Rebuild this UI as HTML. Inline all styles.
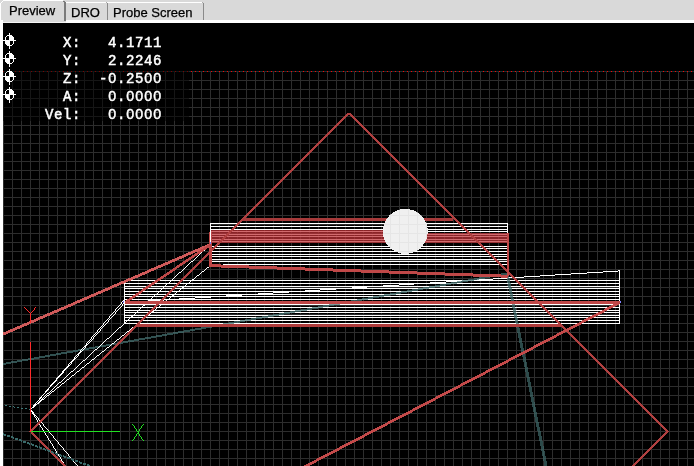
<!DOCTYPE html>
<html><head><meta charset="utf-8"><style>
html,body{margin:0;padding:0;width:694px;height:466px;overflow:hidden;background:#d9d9d9}
svg{position:absolute;left:0;top:0;will-change:transform}
.tab{font-family:"Liberation Sans",sans-serif;font-size:13px;fill:#000;stroke:#000;stroke-width:0.25px}
.dro{font-family:"Liberation Mono",monospace;font-weight:normal;font-size:14px;letter-spacing:0.6px;fill:#fff;stroke:#fff;stroke-width:0.5px;white-space:pre}
</style></head><body>
<svg width="694" height="466" viewBox="0 0 694 466">
<rect x="0" y="0" width="694" height="23" fill="#d9d9d9"/>
<rect x="66" y="20" width="628" height="3" fill="#ffffff"/>
<rect x="0" y="22" width="66" height="1" fill="#f4f4f4"/>
<rect x="0" y="20" width="3" height="446" fill="#ffffff"/>
<path d="M0 466V4H1V3H2V2H3V1H63V0H3V1H2V2H1V3H0Z" fill="#fff"/>
<rect x="0" y="3" width="1" height="20" fill="#fff"/>
<rect x="3" y="0" width="60" height="1" fill="#fff"/>
<rect x="2" y="1" width="1" height="1" fill="#fff"/>
<rect x="1" y="2" width="1" height="1" fill="#fff"/>
<rect x="64" y="2" width="2" height="19" fill="#7a7a7a"/>
<rect x="63" y="1" width="2" height="1" fill="#7a7a7a"/>
<rect x="66" y="2" width="136" height="1" fill="#ffffff"/>
<rect x="107" y="3" width="1" height="17" fill="#8a8a8a"/>
<rect x="106" y="2" width="1" height="1" fill="#aaaaaa"/>
<rect x="203" y="3" width="1" height="17" fill="#8a8a8a"/>
<rect x="202" y="2" width="1" height="1" fill="#aaaaaa"/>
<text class="tab" x="9" y="15">Preview</text>
<text class="tab" x="71" y="17">DRO</text>
<text class="tab" x="113" y="17">Probe Screen</text>
<rect x="3" y="23" width="691" height="443" fill="#000"/>
<path d="M3.5 71V466M12.5 71V466M21.5 71V466M30.5 71V466M39.5 71V466M48.5 71V466M57.5 71V466M66.5 71V466M75.5 71V466M84.5 71V466M93.5 71V466M102.5 71V466M111.5 71V466M120.5 71V466M129.5 71V466M138.5 71V466M147.5 71V466M156.5 71V466M165.5 71V466M174.5 71V466M183.5 71V466M192.5 71V466M201.5 71V466M210.5 71V466M219.5 71V466M228.5 71V466M237.5 71V466M246.5 71V466M255.5 71V466M264.5 71V466M273.5 71V466M282.5 71V466M291.5 71V466M300.5 71V466M309.5 71V466M318.5 71V466M327.5 71V466M336.5 71V466M345.5 71V466M354.5 71V466M363.5 71V466M372.5 71V466M381.5 71V466M390.5 71V466M399.5 71V466M408.5 71V466M417.5 71V466M426.5 71V466M435.5 71V466M444.5 71V466M453.5 71V466M462.5 71V466M471.5 71V466M480.5 71V466M489.5 71V466M498.5 71V466M507.5 71V466M516.5 71V466M525.5 71V466M534.5 71V466M543.5 71V466M552.5 71V466M561.5 71V466M570.5 71V466M579.5 71V466M588.5 71V466M597.5 71V466M606.5 71V466M615.5 71V466M624.5 71V466M633.5 71V466M642.5 71V466M651.5 71V466M660.5 71V466M669.5 71V466M678.5 71V466M687.5 71V466M3 80.5H694M3 89.5H694M3 98.5H694M3 107.5H694M3 116.5H694M3 125.5H694M3 134.5H694M3 143.5H694M3 152.5H694M3 161.5H694M3 170.5H694M3 179.5H694M3 188.5H694M3 197.5H694M3 206.5H694M3 215.5H694M3 224.5H694M3 233.5H694M3 242.5H694M3 251.5H694M3 260.5H694M3 269.5H694M3 278.5H694M3 287.5H694M3 296.5H694M3 305.5H694M3 314.5H694M3 323.5H694M3 332.5H694M3 341.5H694M3 350.5H694M3 359.5H694M3 368.5H694M3 377.5H694M3 386.5H694M3 395.5H694M3 404.5H694M3 413.5H694M3 422.5H694M3 431.5H694M3 440.5H694M3 449.5H694M3 458.5H694" stroke="#2d2d2d" stroke-width="1" shape-rendering="crispEdges" fill="none"/>
<path d="M3 71.5H694" stroke="#1c3030" stroke-width="1" shape-rendering="crispEdges"/>
<path d="M3 71h1v1h-1zM7 71h1v1h-1zM11 71h1v1h-1zM15 71h1v1h-1zM19 71h1v1h-1zM23 71h1v1h-1zM27 71h1v1h-1zM31 71h1v1h-1zM35 71h1v1h-1zM39 71h1v1h-1zM43 71h1v1h-1zM47 71h1v1h-1zM51 71h1v1h-1zM55 71h1v1h-1zM59 71h1v1h-1zM63 71h1v1h-1zM67 71h1v1h-1zM71 71h1v1h-1zM75 71h1v1h-1zM79 71h1v1h-1zM83 71h1v1h-1zM87 71h1v1h-1zM91 71h1v1h-1zM95 71h1v1h-1zM99 71h1v1h-1zM103 71h1v1h-1zM107 71h1v1h-1zM111 71h1v1h-1zM115 71h1v1h-1zM119 71h1v1h-1zM123 71h1v1h-1zM127 71h1v1h-1zM131 71h1v1h-1zM135 71h1v1h-1zM139 71h1v1h-1zM143 71h1v1h-1zM147 71h1v1h-1zM151 71h1v1h-1zM155 71h1v1h-1zM159 71h1v1h-1zM163 71h1v1h-1zM167 71h1v1h-1zM171 71h1v1h-1zM175 71h1v1h-1zM179 71h1v1h-1zM183 71h1v1h-1zM187 71h1v1h-1zM191 71h1v1h-1zM195 71h1v1h-1zM199 71h1v1h-1zM203 71h1v1h-1zM207 71h1v1h-1zM211 71h1v1h-1zM215 71h1v1h-1zM219 71h1v1h-1zM223 71h1v1h-1zM227 71h1v1h-1zM231 71h1v1h-1zM235 71h1v1h-1zM239 71h1v1h-1zM243 71h1v1h-1zM247 71h1v1h-1zM251 71h1v1h-1zM255 71h1v1h-1zM259 71h1v1h-1zM263 71h1v1h-1zM267 71h1v1h-1zM271 71h1v1h-1zM275 71h1v1h-1zM279 71h1v1h-1zM283 71h1v1h-1zM287 71h1v1h-1zM291 71h1v1h-1zM295 71h1v1h-1zM299 71h1v1h-1zM303 71h1v1h-1zM307 71h1v1h-1zM311 71h1v1h-1zM315 71h1v1h-1zM319 71h1v1h-1zM323 71h1v1h-1zM327 71h1v1h-1zM331 71h1v1h-1zM335 71h1v1h-1zM339 71h1v1h-1zM343 71h1v1h-1zM347 71h1v1h-1zM351 71h1v1h-1zM355 71h1v1h-1zM359 71h1v1h-1zM363 71h1v1h-1zM367 71h1v1h-1zM371 71h1v1h-1zM375 71h1v1h-1zM379 71h1v1h-1zM383 71h1v1h-1zM387 71h1v1h-1zM391 71h1v1h-1zM395 71h1v1h-1zM399 71h1v1h-1zM403 71h1v1h-1zM407 71h1v1h-1zM411 71h1v1h-1zM415 71h1v1h-1zM419 71h1v1h-1zM423 71h1v1h-1zM427 71h1v1h-1zM431 71h1v1h-1zM435 71h1v1h-1zM439 71h1v1h-1zM443 71h1v1h-1zM447 71h1v1h-1zM451 71h1v1h-1zM455 71h1v1h-1zM459 71h1v1h-1zM463 71h1v1h-1zM467 71h1v1h-1zM471 71h1v1h-1zM475 71h1v1h-1zM479 71h1v1h-1zM483 71h1v1h-1zM487 71h1v1h-1zM491 71h1v1h-1zM495 71h1v1h-1zM499 71h1v1h-1zM503 71h1v1h-1zM507 71h1v1h-1zM511 71h1v1h-1zM515 71h1v1h-1zM519 71h1v1h-1zM523 71h1v1h-1zM527 71h1v1h-1zM531 71h1v1h-1zM535 71h1v1h-1zM539 71h1v1h-1zM543 71h1v1h-1zM547 71h1v1h-1zM551 71h1v1h-1zM555 71h1v1h-1zM559 71h1v1h-1zM563 71h1v1h-1zM567 71h1v1h-1zM571 71h1v1h-1zM575 71h1v1h-1zM579 71h1v1h-1zM583 71h1v1h-1zM587 71h1v1h-1zM591 71h1v1h-1zM595 71h1v1h-1zM599 71h1v1h-1zM603 71h1v1h-1zM607 71h1v1h-1zM611 71h1v1h-1zM615 71h1v1h-1zM619 71h1v1h-1zM623 71h1v1h-1zM627 71h1v1h-1zM631 71h1v1h-1zM635 71h1v1h-1zM639 71h1v1h-1zM643 71h1v1h-1zM647 71h1v1h-1zM651 71h1v1h-1zM655 71h1v1h-1zM659 71h1v1h-1zM663 71h1v1h-1zM667 71h1v1h-1zM671 71h1v1h-1zM675 71h1v1h-1zM679 71h1v1h-1zM683 71h1v1h-1zM687 71h1v1h-1zM691 71h1v1h-1z" fill="#ff0000"/>

<g fill="none" shape-rendering="crispEdges">
<path d="M210 223.5H507M210 226.5H507M210 229.5H507M210 231.5H507M210 234.5H507M210 236.5H507M210 239.5H507M210 241.5H507M210 246.5H507M210 248.5H507M210 251.5H507M210 254.5H507M210 256.5H507M210 259.5H507M210 261.5H507M223 264.5H507" stroke="#fff" stroke-width="1" shape-rendering="crispEdges"/>
<path d="M124 280.5H620M124 283.5H620M124 286.5H620M124 288.5H620M124 291.5H620M124 294.5H620M124 296.5H620M124 299.5H620M124 302.5H620M124 304.5H620M124 307.5H620M124 310.5H620M124 312.5H620M124 315.5H620M124 317.5H620M124 320.5H620M124 323.5H620M124.5 283V324M619.5 271V324" stroke="#fff" stroke-width="1" shape-rendering="crispEdges"/>
<path d="M124 302h8v1h-8zM132 301h16v1h-16zM148 300h16v1h-16zM164 299h15v1h-15zM179 298h16v1h-16zM195 297h16v1h-16zM211 296h15v1h-15zM226 295h16v1h-16zM242 294h16v1h-16zM258 293h15v1h-15zM273 292h16v1h-16zM289 291h16v1h-16zM305 290h15v1h-15zM320 289h16v1h-16zM336 288h16v1h-16zM352 287h15v1h-15zM367 286h16v1h-16zM383 285h16v1h-16zM399 284h15v1h-15zM414 283h16v1h-16zM430 282h16v1h-16zM446 281h15v1h-15zM461 280h16v1h-16zM477 279h16v1h-16zM493 278h15v1h-15zM508 277h16v1h-16zM524 276h16v1h-16zM540 275h15v1h-15zM555 274h16v1h-16zM571 273h16v1h-16zM587 272h16v1h-16zM603 271h15v1h-15zM618 270h2v1h-2z" fill="#fff"/>
<!-- upper band -->
<path d="M211 233H507V243H211ZM211 230H405V233H211Z" fill="rgb(191,50,55)" fill-opacity="0.72"/>
<!-- teal -->


<path d="M5 405.5L30 409.5" stroke="#3f7878" stroke-width="1" stroke-dasharray="2 2"/>
<path d="M3 363h3v2h-3zM6 362h5v2h-5zM11 361h6v2h-6zM17 360h5v2h-5zM22 359h6v2h-6zM28 358h6v2h-6zM34 357h5v2h-5zM39 356h6v2h-6zM45 355h5v2h-5zM50 354h6v2h-6zM56 353h5v2h-5zM61 352h6v2h-6zM67 351h6v2h-6zM73 350h5v2h-5zM78 349h6v2h-6zM84 348h5v2h-5zM89 347h6v2h-6zM95 346h5v2h-5zM100 345h6v2h-6zM106 344h6v2h-6zM112 343h5v2h-5zM117 342h6v2h-6zM123 341h5v2h-5zM128 340h6v2h-6zM134 339h5v2h-5zM139 338h6v2h-6zM145 337h6v2h-6zM151 336h5v2h-5zM156 335h6v2h-6zM162 334h5v2h-5zM167 333h6v2h-6zM173 332h5v2h-5zM178 331h6v2h-6zM184 330h6v2h-6zM190 329h5v2h-5zM195 328h6v2h-6zM201 327h5v2h-5zM206 326h6v2h-6zM212 325h5v2h-5zM217 324h6v2h-6zM223 323h6v2h-6zM229 322h5v2h-5zM234 321h6v2h-6zM240 320h5v2h-5zM245 319h6v2h-6zM251 318h5v2h-5zM256 317h6v2h-6zM262 316h6v2h-6zM268 315h5v2h-5zM273 314h6v2h-6zM279 313h5v2h-5zM284 312h6v2h-6zM290 311h5v2h-5zM295 310h6v2h-6zM301 309h6v2h-6zM307 308h5v2h-5zM312 307h6v2h-6zM318 306h5v2h-5zM323 305h6v2h-6zM329 304h5v2h-5zM334 303h6v2h-6zM340 302h5v2h-5zM345 301h6v2h-6zM351 300h6v2h-6zM357 299h5v2h-5zM362 298h6v2h-6zM368 297h5v2h-5zM373 296h6v2h-6zM379 295h5v2h-5zM384 294h6v2h-6zM390 293h6v2h-6zM396 292h5v2h-5zM401 291h6v2h-6zM407 290h5v2h-5zM412 289h6v2h-6zM418 288h5v2h-5zM423 287h6v2h-6zM429 286h6v2h-6zM435 285h5v2h-5zM440 284h6v2h-6zM446 283h5v2h-5zM451 282h6v2h-6zM457 281h5v2h-5zM462 280h6v2h-6zM468 279h6v2h-6zM474 278h5v2h-5zM479 277h6v2h-6zM485 276h5v2h-5zM490 275h6v2h-6zM496 274h5v2h-5zM501 273h6v2h-6z" fill="rgb(70,115,115)" fill-opacity="0.7"/><path d="M506 274h3v4h-3zM507 278h3v5h-3zM508 283h3v5h-3zM509 288h3v5h-3zM510 293h3v5h-3zM511 298h3v5h-3zM512 303h3v5h-3zM513 308h3v5h-3zM514 313h3v5h-3zM515 318h3v5h-3zM516 323h3v5h-3zM517 328h3v5h-3zM518 333h3v5h-3zM519 338h3v5h-3zM520 343h3v5h-3zM521 348h3v4h-3zM522 352h3v5h-3zM523 357h3v5h-3zM524 362h3v5h-3zM525 367h3v5h-3zM526 372h3v5h-3zM527 377h3v5h-3zM528 382h3v5h-3zM529 387h3v5h-3zM530 392h3v5h-3zM531 397h3v5h-3zM532 402h3v5h-3zM533 407h3v5h-3zM534 412h3v5h-3zM535 417h3v5h-3zM536 422h3v5h-3zM537 427h3v4h-3zM538 431h3v5h-3zM539 436h3v5h-3zM540 441h3v5h-3zM541 446h3v5h-3zM542 451h3v5h-3zM543 456h3v5h-3zM544 461h3v5h-3z" fill="rgb(62,105,105)" fill-opacity="0.7"/>
<!-- white fan -->
<path d="M123 300h1v1h-1zM122 301h1v1h-1zM121 302h1v2h-1zM120 304h1v1h-1zM119 305h1v1h-1zM118 306h1v1h-1zM117 307h1v1h-1zM116 308h1v1h-1zM115 309h1v2h-1zM114 311h1v1h-1zM113 312h1v1h-1zM112 313h1v1h-1zM111 314h1v1h-1zM110 315h1v1h-1zM109 316h1v2h-1zM108 318h1v1h-1zM107 319h1v1h-1zM106 320h1v1h-1zM105 321h1v1h-1zM104 322h1v1h-1zM103 323h1v2h-1zM102 325h1v1h-1zM101 326h1v1h-1zM100 327h1v1h-1zM99 328h1v1h-1zM98 329h1v1h-1zM97 330h1v2h-1zM96 332h1v1h-1zM95 333h1v1h-1zM94 334h1v1h-1zM93 335h1v1h-1zM92 336h1v1h-1zM91 337h1v2h-1zM90 339h1v1h-1zM89 340h1v1h-1zM88 341h1v1h-1zM87 342h1v1h-1zM86 343h1v2h-1zM85 345h1v1h-1zM84 346h1v1h-1zM83 347h1v1h-1zM82 348h1v1h-1zM81 349h1v1h-1zM80 350h1v2h-1zM79 352h1v1h-1zM78 353h1v1h-1zM77 354h1v1h-1zM76 355h1v1h-1zM75 356h1v1h-1zM74 357h1v2h-1zM73 359h1v1h-1zM72 360h1v1h-1zM71 361h1v1h-1zM70 362h1v1h-1zM69 363h1v1h-1zM68 364h1v2h-1zM67 366h1v1h-1zM66 367h1v1h-1zM65 368h1v1h-1zM64 369h1v1h-1zM63 370h1v1h-1zM62 371h1v2h-1zM61 373h1v1h-1zM60 374h1v1h-1zM59 375h1v1h-1zM58 376h1v1h-1zM57 377h1v1h-1zM56 378h1v2h-1zM55 380h1v1h-1zM54 381h1v1h-1zM53 382h1v1h-1zM52 383h1v1h-1zM51 384h1v1h-1zM50 385h1v2h-1zM49 387h1v1h-1zM48 388h1v1h-1zM47 389h1v1h-1zM46 390h1v1h-1zM45 391h1v2h-1zM44 393h1v1h-1zM43 394h1v1h-1zM42 395h1v1h-1zM41 396h1v1h-1zM40 397h1v1h-1zM39 398h1v2h-1zM38 400h1v1h-1zM37 401h1v1h-1zM36 402h1v1h-1zM35 403h1v1h-1zM34 404h1v1h-1zM33 405h1v2h-1zM32 407h1v1h-1zM31 408h1v1h-1zM30 409h1v1h-1zM125 301h1v1h-1zM124 302h1v1h-1zM123 303h1v1h-1zM122 304h1v2h-1zM121 306h1v1h-1zM120 307h1v1h-1zM119 308h1v1h-1zM118 309h1v1h-1zM117 310h1v1h-1zM116 311h1v1h-1zM115 312h1v2h-1zM114 314h1v1h-1zM113 315h1v1h-1zM112 316h1v1h-1zM111 317h1v1h-1zM110 318h1v1h-1zM109 319h1v1h-1zM108 320h1v2h-1zM107 322h1v1h-1zM106 323h1v1h-1zM105 324h1v1h-1zM104 325h1v1h-1zM103 326h1v1h-1zM102 327h1v1h-1zM101 328h1v1h-1zM100 329h1v2h-1zM99 331h1v1h-1zM98 332h1v1h-1zM97 333h1v1h-1zM96 334h1v1h-1zM95 335h1v1h-1zM94 336h1v1h-1zM93 337h1v2h-1zM92 339h1v1h-1zM91 340h1v1h-1zM90 341h1v1h-1zM89 342h1v1h-1zM88 343h1v1h-1zM87 344h1v1h-1zM86 345h1v1h-1zM85 346h1v2h-1zM84 348h1v1h-1zM83 349h1v1h-1zM82 350h1v1h-1zM81 351h1v1h-1zM80 352h1v1h-1zM79 353h1v1h-1zM78 354h1v2h-1zM77 356h1v1h-1zM76 357h1v1h-1zM75 358h1v1h-1zM74 359h1v1h-1zM73 360h1v1h-1zM72 361h1v1h-1zM71 362h1v2h-1zM70 364h1v1h-1zM69 365h1v1h-1zM68 366h1v1h-1zM67 367h1v1h-1zM66 368h1v1h-1zM65 369h1v1h-1zM64 370h1v1h-1zM63 371h1v2h-1zM62 373h1v1h-1zM61 374h1v1h-1zM60 375h1v1h-1zM59 376h1v1h-1zM58 377h1v1h-1zM57 378h1v1h-1zM56 379h1v2h-1zM55 381h1v1h-1zM54 382h1v1h-1zM53 383h1v1h-1zM52 384h1v1h-1zM51 385h1v1h-1zM50 386h1v1h-1zM49 387h1v1h-1zM48 388h1v2h-1zM47 390h1v1h-1zM46 391h1v1h-1zM45 392h1v1h-1zM44 393h1v1h-1zM43 394h1v1h-1zM42 395h1v1h-1zM41 396h1v2h-1zM40 398h1v1h-1zM39 399h1v1h-1zM38 400h1v1h-1zM37 401h1v1h-1zM36 402h1v1h-1zM35 403h1v1h-1zM34 404h1v2h-1zM33 406h1v1h-1zM32 407h1v1h-1zM31 408h1v1h-1zM30 409h1v1h-1zM31 408h1v1h-1zM32 407h1v1h-1zM33 406h1v1h-1zM34 405h1v1h-1zM35 404h2v1h-2zM37 403h1v1h-1zM38 402h1v1h-1zM39 401h1v1h-1zM40 400h1v1h-1zM41 399h1v1h-1zM42 398h1v1h-1zM43 397h1v1h-1zM44 396h1v1h-1zM45 395h1v1h-1zM46 394h1v1h-1zM47 393h2v1h-2zM49 392h1v1h-1zM50 391h1v1h-1zM51 390h1v1h-1zM52 389h1v1h-1zM53 388h1v1h-1zM54 387h1v1h-1zM55 386h1v1h-1zM56 385h1v1h-1zM57 384h1v1h-1zM58 383h1v1h-1zM59 382h2v1h-2zM61 381h1v1h-1zM62 380h1v1h-1zM63 379h1v1h-1zM64 378h1v1h-1zM65 377h1v1h-1zM66 376h1v1h-1zM67 375h1v1h-1zM68 374h1v1h-1zM69 373h1v1h-1zM70 372h1v1h-1zM71 371h2v1h-2zM73 370h1v1h-1zM74 369h1v1h-1zM75 368h1v1h-1zM76 367h1v1h-1zM77 366h1v1h-1zM78 365h1v1h-1zM79 364h1v1h-1zM80 363h1v1h-1zM81 362h1v1h-1zM82 361h1v1h-1zM83 360h2v1h-2zM85 359h1v1h-1zM86 358h1v1h-1zM87 357h1v1h-1zM88 356h1v1h-1zM89 355h1v1h-1zM90 354h1v1h-1zM91 353h1v1h-1zM92 352h1v1h-1zM93 351h1v1h-1zM94 350h1v1h-1zM95 349h2v1h-2zM97 348h1v1h-1zM98 347h1v1h-1zM99 346h1v1h-1zM100 345h1v1h-1zM101 344h1v1h-1zM102 343h1v1h-1zM103 342h1v1h-1zM104 341h1v1h-1zM105 340h1v1h-1zM106 339h1v1h-1zM107 338h2v1h-2zM109 337h1v1h-1zM110 336h1v1h-1zM111 335h1v1h-1zM112 334h1v1h-1zM113 333h1v1h-1zM114 332h1v1h-1zM115 331h1v1h-1zM116 330h1v1h-1zM117 329h1v1h-1zM118 328h1v1h-1zM119 327h2v1h-2zM121 326h1v1h-1zM122 325h1v1h-1zM123 324h1v1h-1zM124 323h1v1h-1zM125 322h1v1h-1zM126 321h1v1h-1zM127 320h1v1h-1zM128 319h1v1h-1zM129 318h1v1h-1zM130 317h1v1h-1zM131 316h2v1h-2zM133 315h1v1h-1zM134 314h1v1h-1zM135 313h1v1h-1zM136 312h1v1h-1zM137 311h1v1h-1zM138 310h1v1h-1zM139 309h1v1h-1zM140 308h1v1h-1zM141 307h1v1h-1zM142 306h1v1h-1zM143 305h2v1h-2zM145 304h1v1h-1zM146 303h1v1h-1zM147 302h1v1h-1zM148 301h1v1h-1zM149 300h1v1h-1zM150 299h1v1h-1zM151 298h1v1h-1zM152 297h1v1h-1zM153 296h1v1h-1zM154 295h1v1h-1zM155 294h2v1h-2zM157 293h1v1h-1zM158 292h1v1h-1zM159 291h1v1h-1zM160 290h1v1h-1zM161 289h1v1h-1zM162 288h1v1h-1zM163 287h1v1h-1zM164 286h1v1h-1zM165 285h1v1h-1zM166 284h1v1h-1zM167 283h2v1h-2zM169 282h1v1h-1zM170 281h1v1h-1zM171 280h1v1h-1zM172 279h1v1h-1zM173 278h1v1h-1zM174 277h1v1h-1zM175 276h1v1h-1zM176 275h1v1h-1zM177 274h1v1h-1zM178 273h1v1h-1zM179 272h2v1h-2zM181 271h1v1h-1zM182 270h1v1h-1zM183 269h1v1h-1zM184 268h1v1h-1zM185 267h1v1h-1zM186 266h1v1h-1zM187 265h1v1h-1zM188 264h1v1h-1zM189 263h1v1h-1zM190 262h1v1h-1zM191 261h2v1h-2zM193 260h1v1h-1zM194 259h1v1h-1zM195 258h1v1h-1zM196 257h1v1h-1zM197 256h1v1h-1zM198 255h1v1h-1zM199 254h1v1h-1zM200 253h1v1h-1zM201 252h1v1h-1zM202 251h1v1h-1zM203 250h2v1h-2zM205 249h1v1h-1zM206 248h1v1h-1zM207 247h1v1h-1zM208 246h1v1h-1zM209 245h1v1h-1zM31 408h1v1h-1zM32 407h2v1h-2zM34 406h1v1h-1zM35 405h1v1h-1zM36 404h1v1h-1zM37 403h2v1h-2zM39 402h1v1h-1zM40 401h1v1h-1zM41 400h1v1h-1zM42 399h2v1h-2zM44 398h1v1h-1zM45 397h1v1h-1zM46 396h1v1h-1zM47 395h2v1h-2zM49 394h1v1h-1zM50 393h1v1h-1zM51 392h1v1h-1zM52 391h2v1h-2zM54 390h1v1h-1zM55 389h1v1h-1zM56 388h1v1h-1zM57 387h2v1h-2zM59 386h1v1h-1zM60 385h1v1h-1zM61 384h1v1h-1zM62 383h2v1h-2zM64 382h1v1h-1zM65 381h1v1h-1zM66 380h1v1h-1zM67 379h2v1h-2zM69 378h1v1h-1zM70 377h1v1h-1zM71 376h1v1h-1zM72 375h2v1h-2zM74 374h1v1h-1zM75 373h1v1h-1zM76 372h1v1h-1zM77 371h2v1h-2zM79 370h1v1h-1zM80 369h1v1h-1zM81 368h1v1h-1zM82 367h2v1h-2zM84 366h1v1h-1zM85 365h1v1h-1zM86 364h1v1h-1zM87 363h2v1h-2zM89 362h1v1h-1zM90 361h1v1h-1zM91 360h1v1h-1zM92 359h2v1h-2zM94 358h1v1h-1zM95 357h1v1h-1zM96 356h1v1h-1zM97 355h2v1h-2zM99 354h1v1h-1zM100 353h1v1h-1zM101 352h1v1h-1zM102 351h2v1h-2zM104 350h1v1h-1zM105 349h1v1h-1zM106 348h1v1h-1zM107 347h2v1h-2zM109 346h1v1h-1zM110 345h1v1h-1zM111 344h1v1h-1zM112 343h2v1h-2zM114 342h1v1h-1zM115 341h1v1h-1zM116 340h1v1h-1zM117 339h2v1h-2zM119 338h1v1h-1zM120 337h1v1h-1zM121 336h1v1h-1zM122 335h2v1h-2zM124 334h1v1h-1zM125 333h1v1h-1zM126 332h1v1h-1zM127 331h2v1h-2zM129 330h1v1h-1zM130 329h1v1h-1zM131 328h1v1h-1zM132 327h2v1h-2zM134 326h1v1h-1zM135 325h1v1h-1zM136 324h1v1h-1zM137 323h2v1h-2zM139 322h1v1h-1zM140 321h1v1h-1zM141 320h1v1h-1zM142 319h2v1h-2zM144 318h1v1h-1zM145 317h1v1h-1zM146 316h1v1h-1zM147 315h2v1h-2zM149 314h1v1h-1zM150 313h1v1h-1zM151 312h1v1h-1zM152 311h2v1h-2zM154 310h1v1h-1zM155 309h1v1h-1zM156 308h1v1h-1zM157 307h2v1h-2zM159 306h1v1h-1zM160 305h1v1h-1zM161 304h1v1h-1zM162 303h2v1h-2zM164 302h1v1h-1zM165 301h1v1h-1zM166 300h1v1h-1zM167 299h2v1h-2zM169 298h1v1h-1zM170 297h1v1h-1zM171 296h1v1h-1zM172 295h2v1h-2zM174 294h1v1h-1zM175 293h1v1h-1zM176 292h1v1h-1zM177 291h2v1h-2zM179 290h1v1h-1zM180 289h1v1h-1zM181 288h1v1h-1zM182 287h2v1h-2zM184 286h1v1h-1zM185 285h1v1h-1zM186 284h1v1h-1zM187 283h2v1h-2zM189 282h1v1h-1zM190 281h1v1h-1zM191 280h1v1h-1zM192 279h2v1h-2zM194 278h1v1h-1zM195 277h1v1h-1zM196 276h1v1h-1zM197 275h2v1h-2zM199 274h1v1h-1zM200 273h1v1h-1zM201 272h1v1h-1zM202 271h2v1h-2zM204 270h1v1h-1zM205 269h1v1h-1zM206 268h1v1h-1zM207 267h2v1h-2zM209 266h1v1h-1zM31 410h1v2h-1zM32 412h1v2h-1zM33 414h1v1h-1zM34 415h1v2h-1zM35 417h1v1h-1zM36 418h1v2h-1zM37 420h1v2h-1zM38 422h1v1h-1zM39 423h1v2h-1zM40 425h1v2h-1zM41 427h1v1h-1zM42 428h1v2h-1zM43 430h1v1h-1zM44 431h1v2h-1zM45 433h1v2h-1zM46 435h1v1h-1zM47 436h1v2h-1zM48 438h1v2h-1zM49 440h1v1h-1zM50 441h1v2h-1zM51 443h1v1h-1zM52 444h1v2h-1zM53 446h1v2h-1zM54 448h1v1h-1zM55 449h1v2h-1zM56 451h1v2h-1zM57 453h1v1h-1zM58 454h1v2h-1zM59 456h1v1h-1zM60 457h1v2h-1zM61 459h1v2h-1zM62 461h1v1h-1zM63 462h1v2h-1zM64 464h1v2h-1zM31 410h1v1h-1zM32 411h1v1h-1zM33 412h1v2h-1zM34 414h1v1h-1zM35 415h1v1h-1zM36 416h1v1h-1zM37 417h1v1h-1zM38 418h1v2h-1zM39 420h1v1h-1zM40 421h1v1h-1zM41 422h1v1h-1zM42 423h1v1h-1zM43 424h1v2h-1zM44 426h1v1h-1zM45 427h1v1h-1zM46 428h1v1h-1zM47 429h1v1h-1zM48 430h1v2h-1zM49 432h1v1h-1zM50 433h1v1h-1zM51 434h1v1h-1zM52 435h1v1h-1zM53 436h1v2h-1zM54 438h1v1h-1zM55 439h1v1h-1zM56 440h1v1h-1zM57 441h1v1h-1zM58 442h1v2h-1zM59 444h1v1h-1zM60 445h1v1h-1zM61 446h1v1h-1zM62 447h1v1h-1zM63 448h1v2h-1zM64 450h1v1h-1zM65 451h1v1h-1zM66 452h1v1h-1zM67 453h1v1h-1zM68 454h1v2h-1zM69 456h1v1h-1zM70 457h1v1h-1zM71 458h1v1h-1zM72 459h1v1h-1zM73 460h1v2h-1zM74 462h1v1h-1zM75 463h1v1h-1zM76 464h1v1h-1zM77 465h1v1h-1z" fill="#fff"/>
<!-- red diamond -->
<path d="M347 113h3v1h-3zM346 114h3v1h-3zM345 115h3v1h-3zM344 116h3v1h-3zM343 117h3v1h-3zM342 118h3v1h-3zM341 119h3v1h-3zM340 120h3v1h-3zM339 121h3v1h-3zM338 122h3v1h-3zM337 123h3v1h-3zM336 124h3v1h-3zM335 125h3v1h-3zM334 126h3v1h-3zM333 127h3v1h-3zM332 128h3v1h-3zM331 129h3v1h-3zM330 130h3v1h-3zM329 131h3v1h-3zM328 132h3v1h-3zM327 133h3v1h-3zM326 134h3v1h-3zM325 135h3v1h-3zM324 136h3v1h-3zM323 137h3v1h-3zM322 138h3v1h-3zM321 139h3v1h-3zM320 140h3v1h-3zM319 141h3v1h-3zM318 142h3v1h-3zM317 143h3v1h-3zM316 144h3v1h-3zM315 145h3v1h-3zM314 146h3v1h-3zM313 147h3v1h-3zM312 148h3v1h-3zM311 149h3v1h-3zM310 150h3v1h-3zM309 151h3v1h-3zM308 152h3v1h-3zM307 153h3v1h-3zM306 154h3v1h-3zM305 155h3v1h-3zM304 156h3v1h-3zM303 157h3v1h-3zM302 158h3v1h-3zM301 159h3v1h-3zM300 160h3v1h-3zM299 161h3v1h-3zM298 162h3v1h-3zM297 163h3v1h-3zM296 164h3v1h-3zM295 165h3v1h-3zM294 166h3v1h-3zM293 167h3v1h-3zM292 168h3v1h-3zM291 169h3v1h-3zM290 170h3v1h-3zM289 171h3v1h-3zM288 172h3v1h-3zM287 173h3v1h-3zM286 174h3v1h-3zM285 175h3v1h-3zM284 176h3v1h-3zM283 177h3v1h-3zM282 178h3v1h-3zM281 179h3v1h-3zM280 180h3v1h-3zM279 181h3v1h-3zM278 182h3v1h-3zM277 183h3v1h-3zM276 184h3v1h-3zM275 185h3v1h-3zM274 186h3v1h-3zM273 187h3v1h-3zM272 188h3v1h-3zM271 189h3v1h-3zM270 190h3v1h-3zM269 191h3v1h-3zM268 192h3v1h-3zM267 193h3v1h-3zM266 194h3v1h-3zM265 195h3v1h-3zM264 196h3v1h-3zM263 197h3v1h-3zM262 198h3v1h-3zM261 199h3v1h-3zM260 200h3v1h-3zM259 201h3v1h-3zM258 202h3v1h-3zM257 203h3v1h-3zM256 204h3v1h-3zM255 205h3v1h-3zM254 206h3v1h-3zM253 207h3v1h-3zM252 208h3v1h-3zM251 209h3v1h-3zM250 210h3v1h-3zM249 211h3v1h-3zM248 212h3v1h-3zM247 213h3v1h-3zM246 214h3v1h-3zM245 215h3v1h-3zM244 216h3v1h-3zM243 217h3v1h-3zM242 218h3v1h-3zM241 219h3v1h-3zM240 220h3v1h-3zM239 221h3v1h-3zM238 222h3v1h-3zM237 223h3v1h-3zM236 224h3v1h-3zM235 225h3v1h-3zM234 226h3v1h-3zM233 227h3v1h-3zM232 228h3v1h-3zM231 229h3v1h-3zM230 230h3v1h-3zM229 231h3v1h-3zM228 232h3v1h-3zM227 233h3v1h-3zM226 234h3v1h-3zM225 235h3v1h-3zM224 236h3v1h-3zM223 237h3v1h-3zM222 238h3v1h-3zM221 239h3v1h-3zM220 240h3v1h-3zM219 241h3v1h-3zM218 242h3v1h-3zM217 243h3v1h-3zM216 244h3v1h-3zM215 245h3v1h-3zM214 246h3v1h-3zM213 247h3v1h-3zM212 248h3v1h-3zM211 249h3v1h-3zM210 250h3v1h-3zM209 251h3v1h-3zM208 252h3v1h-3zM207 253h3v1h-3zM206 254h3v1h-3zM205 255h3v1h-3zM204 256h3v1h-3zM203 257h3v1h-3zM202 258h3v1h-3zM201 259h3v1h-3zM200 260h3v1h-3zM199 261h3v1h-3zM198 262h3v1h-3zM197 263h3v1h-3zM196 264h3v1h-3zM195 265h3v1h-3zM194 266h3v1h-3zM193 267h3v1h-3zM192 268h3v1h-3zM191 269h3v1h-3zM190 270h3v1h-3zM189 271h3v1h-3zM188 272h3v1h-3zM187 273h3v1h-3zM186 274h3v1h-3zM185 275h3v1h-3zM184 276h3v1h-3zM183 277h3v1h-3zM182 278h3v1h-3zM181 279h3v1h-3zM180 280h3v1h-3zM179 281h3v1h-3zM178 282h3v1h-3zM177 283h3v1h-3zM176 284h3v1h-3zM175 285h3v1h-3zM174 286h3v1h-3zM173 287h3v1h-3zM172 288h3v1h-3zM171 289h3v1h-3zM170 290h3v1h-3zM169 291h3v1h-3zM168 292h3v1h-3zM167 293h3v1h-3zM166 294h3v1h-3zM165 295h3v1h-3zM164 296h3v1h-3zM163 297h3v1h-3zM162 298h3v1h-3zM161 299h3v1h-3zM160 300h3v1h-3zM159 301h3v1h-3zM158 302h3v1h-3zM157 303h3v1h-3zM156 304h3v1h-3zM155 305h3v1h-3zM154 306h3v1h-3zM153 307h3v1h-3zM152 308h3v1h-3zM151 309h3v1h-3zM150 310h3v1h-3zM149 311h3v1h-3zM148 312h3v1h-3zM147 313h3v1h-3zM146 314h3v1h-3zM145 315h3v1h-3zM144 316h3v1h-3zM143 317h3v1h-3zM142 318h3v1h-3zM141 319h3v1h-3zM140 320h3v1h-3zM139 321h3v1h-3zM138 322h3v1h-3zM137 323h3v1h-3zM136 324h3v1h-3zM135 325h3v1h-3zM134 326h3v1h-3zM133 327h3v1h-3zM132 328h3v1h-3zM131 329h3v1h-3zM130 330h3v1h-3zM129 331h3v1h-3zM128 332h3v1h-3zM127 333h3v1h-3zM126 334h3v1h-3zM125 335h3v1h-3zM124 336h3v1h-3zM123 337h3v1h-3zM122 338h3v1h-3zM121 339h3v1h-3zM120 340h3v1h-3zM119 341h3v1h-3zM118 342h3v1h-3zM117 343h3v1h-3zM116 344h3v1h-3zM115 345h3v1h-3zM114 346h3v1h-3zM113 347h3v1h-3zM112 348h3v1h-3zM111 349h3v1h-3zM110 350h3v1h-3zM109 351h3v1h-3zM108 352h3v1h-3zM107 353h3v1h-3zM106 354h3v1h-3zM105 355h3v1h-3zM104 356h3v1h-3zM103 357h3v1h-3zM102 358h3v1h-3zM101 359h3v1h-3zM100 360h3v1h-3zM99 361h3v1h-3zM98 362h3v1h-3zM97 363h3v1h-3zM96 364h3v1h-3zM95 365h3v1h-3zM94 366h3v1h-3zM93 367h3v1h-3zM92 368h3v1h-3zM91 369h3v1h-3zM90 370h3v1h-3zM89 371h3v1h-3zM88 372h3v1h-3zM87 373h3v1h-3zM86 374h3v1h-3zM85 375h3v1h-3zM84 376h3v1h-3zM83 377h3v1h-3zM82 378h3v1h-3zM81 379h3v1h-3zM80 380h3v1h-3zM79 381h3v1h-3zM78 382h3v1h-3zM77 383h3v1h-3zM76 384h3v1h-3zM75 385h3v1h-3zM74 386h3v1h-3zM73 387h3v1h-3zM72 388h3v1h-3zM71 389h3v1h-3zM70 390h3v1h-3zM69 391h3v1h-3zM68 392h3v1h-3zM67 393h3v1h-3zM66 394h3v1h-3zM65 395h3v1h-3zM64 396h3v1h-3zM63 397h3v1h-3zM62 398h3v1h-3zM61 399h3v1h-3zM60 400h3v1h-3zM59 401h3v1h-3zM58 402h3v1h-3zM57 403h3v1h-3zM56 404h3v1h-3zM55 405h3v1h-3zM54 406h3v1h-3zM53 407h3v1h-3zM52 408h3v1h-3zM51 409h3v1h-3zM50 410h3v1h-3zM49 411h3v1h-3zM48 412h3v1h-3zM47 413h3v1h-3zM46 414h3v1h-3zM45 415h3v1h-3zM44 416h3v1h-3zM43 417h3v1h-3zM42 418h3v1h-3zM41 419h3v1h-3zM40 420h3v1h-3zM39 421h3v1h-3zM38 422h3v1h-3zM37 423h3v1h-3zM36 424h3v1h-3zM35 425h3v1h-3zM34 426h3v1h-3zM33 427h3v1h-3zM32 428h3v1h-3zM31 429h3v1h-3zM30 430h3v1h-3zM29 431h3v1h-3zM31 431h1v3h-1zM32 432h1v3h-1zM33 433h1v3h-1zM34 434h1v3h-1zM35 435h1v3h-1zM36 436h1v3h-1zM37 437h1v3h-1zM38 438h1v3h-1zM39 439h1v3h-1zM40 440h1v3h-1zM41 441h1v3h-1zM42 442h1v3h-1zM43 443h1v3h-1zM44 444h1v3h-1zM45 445h1v3h-1zM46 446h1v3h-1zM47 447h1v3h-1zM48 448h1v3h-1zM49 449h1v3h-1zM50 450h1v3h-1zM51 451h1v3h-1zM52 452h1v3h-1zM53 453h1v3h-1zM54 454h1v3h-1zM55 455h1v3h-1zM56 456h1v3h-1zM57 457h1v3h-1zM58 458h1v3h-1zM59 459h1v3h-1zM60 460h1v3h-1zM61 461h1v3h-1zM62 462h1v3h-1zM63 463h1v3h-1zM64 464h1v2h-1zM65 465h1v1h-1zM348 113h3v1h-3zM349 114h3v1h-3zM350 115h3v1h-3zM351 116h3v1h-3zM352 117h3v1h-3zM353 118h3v1h-3zM354 119h3v1h-3zM355 120h3v1h-3zM356 121h3v1h-3zM357 122h3v1h-3zM358 123h3v1h-3zM359 124h3v1h-3zM360 125h3v1h-3zM361 126h3v1h-3zM362 127h3v1h-3zM363 128h3v1h-3zM364 129h3v1h-3zM365 130h3v1h-3zM366 131h3v1h-3zM367 132h3v1h-3zM368 133h3v1h-3zM369 134h3v1h-3zM370 135h3v1h-3zM371 136h3v1h-3zM372 137h3v1h-3zM373 138h3v1h-3zM374 139h3v1h-3zM375 140h3v1h-3zM376 141h3v1h-3zM377 142h3v1h-3zM378 143h3v1h-3zM379 144h3v1h-3zM380 145h3v1h-3zM381 146h3v1h-3zM382 147h3v1h-3zM383 148h3v1h-3zM384 149h3v1h-3zM385 150h3v1h-3zM386 151h3v1h-3zM387 152h3v1h-3zM388 153h3v1h-3zM389 154h3v1h-3zM390 155h3v1h-3zM391 156h3v1h-3zM392 157h3v1h-3zM393 158h3v1h-3zM394 159h3v1h-3zM395 160h3v1h-3zM396 161h3v1h-3zM397 162h3v1h-3zM398 163h3v1h-3zM399 164h3v1h-3zM400 165h3v1h-3zM401 166h3v1h-3zM402 167h3v1h-3zM403 168h3v1h-3zM404 169h3v1h-3zM405 170h3v1h-3zM406 171h3v1h-3zM407 172h3v1h-3zM408 173h3v1h-3zM409 174h3v1h-3zM410 175h3v1h-3zM411 176h3v1h-3zM412 177h3v1h-3zM413 178h3v1h-3zM414 179h3v1h-3zM415 180h3v1h-3zM416 181h3v1h-3zM417 182h3v1h-3zM418 183h3v1h-3zM419 184h3v1h-3zM420 185h3v1h-3zM421 186h3v1h-3zM422 187h3v1h-3zM423 188h3v1h-3zM424 189h3v1h-3zM425 190h3v1h-3zM426 191h3v1h-3zM427 192h3v1h-3zM428 193h3v1h-3zM429 194h3v1h-3zM430 195h3v1h-3zM431 196h3v1h-3zM432 197h3v1h-3zM433 198h3v1h-3zM434 199h3v1h-3zM435 200h3v1h-3zM436 201h3v1h-3zM437 202h3v1h-3zM438 203h3v1h-3zM439 204h3v1h-3zM440 205h3v1h-3zM441 206h3v1h-3zM442 207h3v1h-3zM443 208h3v1h-3zM444 209h3v1h-3zM445 210h3v1h-3zM446 211h3v1h-3zM447 212h3v1h-3zM448 213h3v1h-3zM449 214h3v1h-3zM450 215h3v1h-3zM451 216h3v1h-3zM452 217h3v1h-3zM453 218h3v1h-3zM454 219h3v1h-3zM455 220h3v1h-3zM456 221h3v1h-3zM457 222h3v1h-3zM458 223h3v1h-3zM459 224h3v1h-3zM460 225h3v1h-3zM461 226h3v1h-3zM462 227h3v1h-3zM463 228h3v1h-3zM464 229h3v1h-3zM465 230h3v1h-3zM466 231h3v1h-3zM467 232h3v1h-3zM468 233h3v1h-3zM469 234h3v1h-3zM470 235h3v1h-3zM471 236h3v1h-3zM472 237h3v1h-3zM473 238h3v1h-3zM474 239h3v1h-3zM475 240h3v1h-3zM476 241h3v1h-3zM477 242h3v1h-3zM478 243h3v1h-3zM479 244h3v1h-3zM480 245h3v1h-3zM481 246h3v1h-3zM482 247h3v1h-3zM483 248h3v1h-3zM484 249h3v1h-3zM485 250h3v1h-3zM486 251h3v1h-3zM487 252h3v1h-3zM488 253h3v1h-3zM489 254h3v1h-3zM490 255h3v1h-3zM491 256h3v1h-3zM492 257h3v1h-3zM493 258h3v1h-3zM494 259h3v1h-3zM495 260h3v1h-3zM496 261h3v1h-3zM497 262h3v1h-3zM498 263h3v1h-3zM499 264h3v1h-3zM500 265h3v1h-3zM501 266h3v1h-3zM502 267h3v1h-3zM503 268h3v1h-3zM504 269h3v1h-3zM505 270h3v1h-3zM506 271h3v1h-3zM507 272h3v1h-3zM508 273h3v1h-3zM509 274h3v1h-3zM510 275h3v1h-3zM511 276h3v1h-3zM512 277h3v1h-3zM513 278h3v1h-3zM514 279h3v1h-3zM515 280h3v1h-3zM516 281h3v1h-3zM517 282h3v1h-3zM518 283h3v1h-3zM519 284h3v1h-3zM520 285h3v1h-3zM521 286h3v1h-3zM522 287h3v1h-3zM523 288h3v1h-3zM524 289h3v1h-3zM525 290h3v1h-3zM526 291h3v1h-3zM527 292h3v1h-3zM528 293h3v1h-3zM529 294h3v1h-3zM530 295h3v1h-3zM531 296h3v1h-3zM532 297h3v1h-3zM533 298h3v1h-3zM534 299h3v1h-3zM535 300h3v1h-3zM536 301h3v1h-3zM537 302h3v1h-3zM538 303h3v1h-3zM539 304h3v1h-3zM540 305h3v1h-3zM541 306h3v1h-3zM542 307h3v1h-3zM543 308h3v1h-3zM544 309h3v1h-3zM545 310h3v1h-3zM546 311h3v1h-3zM547 312h3v1h-3zM548 313h3v1h-3zM549 314h3v1h-3zM550 315h3v1h-3zM551 316h3v1h-3zM552 317h3v1h-3zM553 318h3v1h-3zM554 319h3v1h-3zM555 320h3v1h-3zM556 321h3v1h-3zM557 322h3v1h-3zM558 323h3v1h-3zM559 324h3v1h-3zM560 325h3v1h-3zM561 326h3v1h-3zM562 327h3v1h-3zM563 328h3v1h-3zM564 329h3v1h-3zM565 330h3v1h-3zM566 331h3v1h-3zM567 332h3v1h-3zM568 333h3v1h-3zM569 334h3v1h-3zM570 335h3v1h-3zM571 336h3v1h-3zM572 337h3v1h-3zM573 338h3v1h-3zM574 339h3v1h-3zM575 340h3v1h-3zM576 341h3v1h-3zM577 342h3v1h-3zM578 343h3v1h-3zM579 344h3v1h-3zM580 345h3v1h-3zM581 346h3v1h-3zM582 347h3v1h-3zM583 348h3v1h-3zM584 349h3v1h-3zM585 350h3v1h-3zM586 351h3v1h-3zM587 352h3v1h-3zM588 353h3v1h-3zM589 354h3v1h-3zM590 355h3v1h-3zM591 356h3v1h-3zM592 357h3v1h-3zM593 358h3v1h-3zM594 359h3v1h-3zM595 360h3v1h-3zM596 361h3v1h-3zM597 362h3v1h-3zM598 363h3v1h-3zM599 364h3v1h-3zM600 365h3v1h-3zM601 366h3v1h-3zM602 367h3v1h-3zM603 368h3v1h-3zM604 369h3v1h-3zM605 370h3v1h-3zM606 371h3v1h-3zM607 372h3v1h-3zM608 373h3v1h-3zM609 374h3v1h-3zM610 375h3v1h-3zM611 376h3v1h-3zM612 377h3v1h-3zM613 378h3v1h-3zM614 379h3v1h-3zM615 380h3v1h-3zM616 381h3v1h-3zM617 382h3v1h-3zM618 383h3v1h-3zM619 384h3v1h-3zM620 385h3v1h-3zM621 386h3v1h-3zM622 387h3v1h-3zM623 388h3v1h-3zM624 389h3v1h-3zM625 390h3v1h-3zM626 391h3v1h-3zM627 392h3v1h-3zM628 393h3v1h-3zM629 394h3v1h-3zM630 395h3v1h-3zM631 396h3v1h-3zM632 397h3v1h-3zM633 398h3v1h-3zM634 399h3v1h-3zM635 400h3v1h-3zM636 401h3v1h-3zM637 402h3v1h-3zM638 403h3v1h-3zM639 404h3v1h-3zM640 405h3v1h-3zM641 406h3v1h-3zM642 407h3v1h-3zM643 408h3v1h-3zM644 409h3v1h-3zM645 410h3v1h-3zM646 411h3v1h-3zM647 412h3v1h-3zM648 413h3v1h-3zM649 414h3v1h-3zM650 415h3v1h-3zM651 416h3v1h-3zM652 417h3v1h-3zM653 418h3v1h-3zM654 419h3v1h-3zM655 420h3v1h-3zM656 421h3v1h-3zM657 422h3v1h-3zM658 423h3v1h-3zM659 424h3v1h-3zM660 425h3v1h-3zM661 426h3v1h-3zM662 427h3v1h-3zM663 428h3v1h-3zM664 429h3v1h-3zM665 430h3v1h-3zM666 431h3v1h-3zM665 432h3v1h-3zM664 433h3v1h-3zM663 434h3v1h-3zM662 435h3v1h-3zM661 436h3v1h-3zM660 437h3v1h-3zM659 438h3v1h-3zM658 439h3v1h-3zM657 440h3v1h-3zM656 441h3v1h-3zM655 442h3v1h-3zM654 443h3v1h-3zM653 444h3v1h-3zM652 445h3v1h-3zM651 446h3v1h-3zM650 447h3v1h-3zM649 448h3v1h-3zM648 449h3v1h-3zM647 450h3v1h-3zM646 451h3v1h-3zM645 452h3v1h-3zM644 453h3v1h-3zM643 454h3v1h-3zM642 455h3v1h-3zM641 456h3v1h-3zM640 457h3v1h-3zM639 458h3v1h-3zM638 459h3v1h-3zM637 460h3v1h-3zM636 461h3v1h-3zM635 462h3v1h-3zM634 463h3v1h-3zM633 464h3v1h-3zM632 465h3v1h-3z" fill="#b04040"/>
<path d="M3 433h1v2h-1zM4 434h2v2h-2zM7 435h3v2h-3zM11 436h2v2h-2zM13 437h1v2h-1zM15 438h3v2h-3zM19 439h2v2h-2zM21 440h1v2h-1zM23 441h3v2h-3zM27 442h2v2h-2zM29 443h1v2h-1zM31 443h1v2h-1zM32 444h2v2h-2zM35 445h2v2h-2zM37 446h1v2h-1zM39 446h1v2h-1zM40 447h2v2h-2zM43 448h2v2h-2zM45 449h1v2h-1zM47 449h1v2h-1zM48 450h2v2h-2zM51 451h2v2h-2zM53 452h1v2h-1zM55 452h1v2h-1zM56 453h2v2h-2zM59 454h2v2h-2zM61 455h1v2h-1zM63 455h1v2h-1zM64 456h2v2h-2zM67 457h3v2h-3zM71 458h1v2h-1zM72 459h2v2h-2zM75 460h3v2h-3zM79 461h1v2h-1zM80 462h2v2h-2zM83 463h3v2h-3zM87 464h2v2h-2zM89 465h1v1h-1z" fill="#3a6a6a"/>
<!-- backplot red -->
<path d="M3 332h3v3h-3zM6 331h2v3h-2zM8 330h2v3h-2zM10 329h3v3h-3zM13 328h2v3h-2zM15 327h2v3h-2zM17 326h3v3h-3zM20 325h2v3h-2zM22 324h2v3h-2zM24 323h3v3h-3zM27 322h2v3h-2zM29 321h2v3h-2zM31 320h3v3h-3zM34 319h2v3h-2zM36 318h2v3h-2zM38 317h2v3h-2zM40 316h3v3h-3zM43 315h2v3h-2zM45 314h2v3h-2zM47 313h3v3h-3zM50 312h2v3h-2zM52 311h2v3h-2zM54 310h3v3h-3zM57 309h2v3h-2zM59 308h2v3h-2zM61 307h3v3h-3zM64 306h2v3h-2zM66 305h2v3h-2zM68 304h3v3h-3zM71 303h2v3h-2zM73 302h2v3h-2zM75 301h2v3h-2zM77 300h3v3h-3zM80 299h2v3h-2zM82 298h2v3h-2zM84 297h3v3h-3zM87 296h2v3h-2zM89 295h2v3h-2zM91 294h3v3h-3zM94 293h2v3h-2zM96 292h2v3h-2zM98 291h3v3h-3zM101 290h2v3h-2zM103 289h2v3h-2zM105 288h3v3h-3zM108 287h2v3h-2zM110 286h2v3h-2zM112 285h2v3h-2zM114 284h3v3h-3zM117 283h2v3h-2zM119 282h2v3h-2zM121 281h3v3h-3zM124 280h2v3h-2zM126 279h2v3h-2zM128 278h3v3h-3zM131 277h2v3h-2zM133 276h2v3h-2zM135 275h3v3h-3zM138 274h2v3h-2zM140 273h2v3h-2zM142 272h3v3h-3zM145 271h2v3h-2zM147 270h2v3h-2zM149 269h2v3h-2zM151 268h3v3h-3zM154 267h2v3h-2zM156 266h2v3h-2zM158 265h3v3h-3zM161 264h2v3h-2zM163 263h2v3h-2zM165 262h3v3h-3zM168 261h2v3h-2zM170 260h2v3h-2zM172 259h3v3h-3zM175 258h2v3h-2zM177 257h2v3h-2zM179 256h3v3h-3zM182 255h2v3h-2zM184 254h2v3h-2zM186 253h2v3h-2zM188 252h3v3h-3zM191 251h2v3h-2zM193 250h2v3h-2zM195 249h3v3h-3zM198 248h2v3h-2zM200 247h2v3h-2zM202 246h3v3h-3zM205 245h2v3h-2zM207 244h2v3h-2zM209 243h1v3h-1z" fill="#d05a5a"/>
<path d="M125 301h1v3h-1zM126 300h1v3h-1zM127 299h2v3h-2zM129 298h1v3h-1zM130 297h2v3h-2zM132 296h1v3h-1zM133 295h2v3h-2zM135 294h1v3h-1zM136 293h2v3h-2zM138 292h1v3h-1zM139 291h2v3h-2zM141 290h1v3h-1zM142 289h1v3h-1zM143 288h2v3h-2zM145 287h1v3h-1zM146 286h2v3h-2zM148 285h1v3h-1zM149 284h2v3h-2zM151 283h1v3h-1zM152 282h2v3h-2zM154 281h1v3h-1zM155 280h2v3h-2zM157 279h1v3h-1zM158 278h2v3h-2zM160 277h1v3h-1zM161 276h2v3h-2zM163 275h1v3h-1zM164 274h2v3h-2zM166 273h1v3h-1zM167 272h2v3h-2zM169 271h1v3h-1zM170 270h2v3h-2zM172 269h1v3h-1zM173 268h2v3h-2zM175 267h1v3h-1zM176 266h1v3h-1zM177 265h2v3h-2zM179 264h1v3h-1zM180 263h2v3h-2zM182 262h1v3h-1zM183 261h2v3h-2zM185 260h1v3h-1zM186 259h2v3h-2zM188 258h1v3h-1zM189 257h2v3h-2zM191 256h1v3h-1zM192 255h2v3h-2zM194 254h1v3h-1zM195 253h2v3h-2zM197 252h1v3h-1zM198 251h2v3h-2zM200 250h1v3h-1zM201 249h2v3h-2zM203 248h1v3h-1zM204 247h2v3h-2zM206 246h1v3h-1zM207 245h2v3h-2zM209 244h1v3h-1z" fill="#c04848"/>
<path d="M304 465h2v1h-2zM306 464h2v2h-2zM308 463h2v3h-2zM310 462h2v3h-2zM312 461h2v3h-2zM314 460h2v3h-2zM316 459h1v3h-1zM317 458h2v3h-2zM319 457h2v3h-2zM321 456h2v3h-2zM323 455h2v3h-2zM325 454h2v3h-2zM327 453h2v3h-2zM329 452h2v3h-2zM331 451h2v3h-2zM333 450h2v3h-2zM335 449h2v3h-2zM337 448h2v3h-2zM339 447h1v3h-1zM340 446h2v3h-2zM342 445h2v3h-2zM344 444h2v3h-2zM346 443h2v3h-2zM348 442h2v3h-2zM350 441h2v3h-2zM352 440h2v3h-2zM354 439h2v3h-2zM356 438h2v3h-2zM358 437h2v3h-2zM360 436h2v3h-2zM362 435h2v3h-2zM364 434h1v3h-1zM365 433h2v3h-2zM367 432h2v3h-2zM369 431h2v3h-2zM371 430h2v3h-2zM373 429h2v3h-2zM375 428h2v3h-2zM377 427h2v3h-2zM379 426h2v3h-2zM381 425h2v3h-2zM383 424h2v3h-2zM385 423h2v3h-2zM387 422h1v3h-1zM388 421h2v3h-2zM390 420h2v3h-2zM392 419h2v3h-2zM394 418h2v3h-2zM396 417h2v3h-2zM398 416h2v3h-2zM400 415h2v3h-2zM402 414h2v3h-2zM404 413h2v3h-2zM406 412h2v3h-2zM408 411h2v3h-2zM410 410h2v3h-2zM412 409h1v3h-1zM413 408h2v3h-2zM415 407h2v3h-2zM417 406h2v3h-2zM419 405h2v3h-2zM421 404h2v3h-2zM423 403h2v3h-2zM425 402h2v3h-2zM427 401h2v3h-2zM429 400h2v3h-2zM431 399h2v3h-2zM433 398h2v3h-2zM435 397h1v3h-1zM436 396h2v3h-2zM438 395h2v3h-2zM440 394h2v3h-2zM442 393h2v3h-2zM444 392h2v3h-2zM446 391h2v3h-2zM448 390h2v3h-2zM450 389h2v3h-2zM452 388h2v3h-2zM454 387h2v3h-2zM456 386h2v3h-2zM458 385h2v3h-2zM460 384h1v3h-1zM461 383h2v3h-2zM463 382h2v3h-2zM465 381h2v3h-2zM467 380h2v3h-2zM469 379h2v3h-2zM471 378h2v3h-2zM473 377h2v3h-2zM475 376h2v3h-2zM477 375h2v3h-2zM479 374h2v3h-2zM481 373h2v3h-2zM483 372h2v3h-2zM485 371h1v3h-1zM486 370h2v3h-2zM488 369h2v3h-2zM490 368h2v3h-2zM492 367h2v3h-2zM494 366h2v3h-2zM496 365h2v3h-2zM498 364h2v3h-2zM500 363h2v3h-2zM502 362h2v3h-2zM504 361h2v3h-2zM506 360h2v3h-2zM508 359h1v3h-1zM509 358h2v3h-2zM511 357h2v3h-2zM513 356h2v3h-2zM515 355h2v3h-2zM517 354h2v3h-2zM519 353h2v3h-2zM521 352h2v3h-2zM523 351h2v3h-2zM525 350h2v3h-2zM527 349h2v3h-2zM529 348h2v3h-2zM531 347h2v3h-2zM533 346h1v3h-1zM534 345h2v3h-2zM536 344h2v3h-2zM538 343h2v3h-2zM540 342h2v3h-2zM542 341h2v3h-2zM544 340h2v3h-2zM546 339h2v3h-2zM548 338h2v3h-2zM550 337h2v3h-2zM552 336h2v3h-2zM554 335h2v3h-2zM556 334h1v3h-1zM557 333h2v3h-2zM559 332h2v3h-2zM561 331h2v3h-2zM563 330h2v3h-2zM565 329h2v3h-2zM567 328h2v3h-2zM569 327h2v3h-2zM571 326h2v3h-2zM573 325h2v3h-2zM575 324h2v3h-2zM577 323h2v3h-2zM579 322h2v3h-2zM581 321h1v3h-1zM582 320h2v3h-2zM584 319h2v3h-2zM586 318h2v3h-2zM588 317h2v3h-2zM590 316h2v3h-2zM592 315h2v3h-2zM594 314h2v3h-2zM596 313h2v3h-2zM598 312h2v3h-2zM600 311h2v3h-2zM602 310h2v3h-2zM604 309h1v3h-1zM605 308h2v3h-2zM607 307h2v3h-2zM609 306h2v3h-2zM611 305h2v3h-2zM613 304h2v3h-2zM615 303h2v3h-2zM617 302h2v3h-2zM619 301h1v3h-1z" fill="#c44a4a"/>
<path d="M243 219.5H453" stroke="#a63a3a" stroke-width="3"/>
<path d="M209 264h12v3h-12zM221 265h28v3h-28zM249 266h28v3h-28zM277 267h28v3h-28zM305 268h28v3h-28zM333 269h28v3h-28zM361 270h28v3h-28zM389 271h28v3h-28zM417 272h28v3h-28zM445 273h28v3h-28zM473 274h28v3h-28zM501 275h7v3h-7z" fill="#c04848"/>
<path d="M209 232h3v33h-3zM507 233h2v43h-2z" fill="#c04848"/>
<path d="M210 223h1v21h-1zM507 223h1v10h-1z" fill="#fff"/>
<path d="M125 302.5H620" stroke="#c04848" stroke-width="2.5"/>
<path d="M136 325.5H562" stroke="#b03c3c" stroke-width="3"/>
<!-- axes -->
<path d="M30.5 342V431.5" stroke="#ff2a2a" stroke-width="1" shape-rendering="crispEdges"/>
<path d="M24 307h1v1h-1zM25 308h1v1h-1zM26 309h1v1h-1zM27 310h1v1h-1zM28 311h1v1h-1zM29 312h1v1h-1zM30 313h1v1h-1zM35 307h1v1h-1zM34 308h1v2h-1zM33 310h1v1h-1zM32 311h1v1h-1zM31 312h1v1h-1zM30 313h1v1h-1zM30 314h1v9h-1z" fill="#ff2a2a"/>
<path d="M31 431.5H120" stroke="#22e022" stroke-width="1" shape-rendering="crispEdges"/>
<path d="M132 424h1v1h-1zM133 425h1v1h-1zM134 426h1v2h-1zM135 428h1v1h-1zM136 429h1v2h-1zM137 431h1v1h-1zM138 432h1v2h-1zM139 434h1v2h-1zM140 436h1v1h-1zM141 437h1v2h-1zM142 439h1v1h-1zM143 440h1v1h-1zM143 424h1v1h-1zM142 425h1v1h-1zM141 426h1v2h-1zM140 428h1v1h-1zM139 429h1v2h-1zM138 431h1v2h-1zM137 433h1v1h-1zM136 434h1v2h-1zM135 436h1v1h-1zM134 437h1v2h-1zM133 439h1v1h-1zM132 440h1v1h-1z" fill="#22e022"/>
<path d="M210 242h1v2h-1zM123 301h1v2h-1zM620 301h1v2h-1z" fill="#8080ff"/>
<clipPath id="cc"><circle cx="405.3" cy="231.4" r="22.5"/></clipPath>
<circle cx="405.3" cy="231.4" r="22.5" fill="#f0f0f0"/>
<path clip-path="url(#cc)" d="M390.5 200V260M399.5 200V260M408.5 200V260M417.5 200V260M426.5 200V260M380 215.5H430M380 224.5H430M380 233.5H430M380 242.5H430M380 251.5H430" stroke="#e6e6e6" stroke-width="1"/>
</g>
<rect x="3" y="23" width="186" height="98" fill="#000" fill-opacity="0.5"/>
<path d="M7 35h5v1h-5zM6 36h1v1h-1zM9 36h4v1h-4zM5 37h1v1h-1zM9 37h5v1h-5zM5 38h1v1h-1zM9 38h5v1h-5zM5 39h1v1h-1zM9 39h5v1h-5zM3 40h13v1h-13zM5 41h5v1h-5zM13 41h1v1h-1zM5 42h5v1h-5zM13 42h1v1h-1zM5 43h5v1h-5zM13 43h1v1h-1zM6 44h4v1h-4zM12 44h1v1h-1zM7 45h5v1h-5zM9 33h1v16h-1zM7 53h5v1h-5zM6 54h1v1h-1zM9 54h4v1h-4zM5 55h1v1h-1zM9 55h5v1h-5zM5 56h1v1h-1zM9 56h5v1h-5zM5 57h1v1h-1zM9 57h5v1h-5zM3 58h13v1h-13zM5 59h5v1h-5zM13 59h1v1h-1zM5 60h5v1h-5zM13 60h1v1h-1zM5 61h5v1h-5zM13 61h1v1h-1zM6 62h4v1h-4zM12 62h1v1h-1zM7 63h5v1h-5zM9 51h1v16h-1zM7 71h5v1h-5zM6 72h1v1h-1zM9 72h4v1h-4zM5 73h1v1h-1zM9 73h5v1h-5zM5 74h1v1h-1zM9 74h5v1h-5zM5 75h1v1h-1zM9 75h5v1h-5zM3 76h13v1h-13zM5 77h5v1h-5zM13 77h1v1h-1zM5 78h5v1h-5zM13 78h1v1h-1zM5 79h5v1h-5zM13 79h1v1h-1zM6 80h4v1h-4zM12 80h1v1h-1zM7 81h5v1h-5zM9 69h1v16h-1zM7 89h5v1h-5zM6 90h1v1h-1zM9 90h4v1h-4zM5 91h1v1h-1zM9 91h5v1h-5zM5 92h1v1h-1zM9 92h5v1h-5zM5 93h1v1h-1zM9 93h5v1h-5zM3 94h13v1h-13zM5 95h5v1h-5zM13 95h1v1h-1zM5 96h5v1h-5zM13 96h1v1h-1zM5 97h5v1h-5zM13 97h1v1h-1zM6 98h4v1h-4zM12 98h1v1h-1zM7 99h5v1h-5zM9 87h1v16h-1z" fill="#fff" shape-rendering="crispEdges"/>
<text class="dro" x="45" y="46.5" xml:space="preserve">  X:   4.1711</text>
<text class="dro" x="45" y="64.5" xml:space="preserve">  Y:   2.2246</text>
<text class="dro" x="45" y="82.5" xml:space="preserve">  Z:  -0.2500</text>
<text class="dro" x="45" y="100.5" xml:space="preserve">  A:   0.0000</text>
<text class="dro" x="45" y="118.5" xml:space="preserve">Vel:   0.0000</text>
<path d="M111 77h3v3h-3zM147 77h3v3h-3zM156 77h3v3h-3zM111 95h3v3h-3zM129 95h3v3h-3zM138 95h3v3h-3zM147 95h3v3h-3zM156 95h3v3h-3zM111 113h3v3h-3zM129 113h3v3h-3zM138 113h3v3h-3zM147 113h3v3h-3zM156 113h3v3h-3z" fill="#000"/>
</svg>
</body></html>
